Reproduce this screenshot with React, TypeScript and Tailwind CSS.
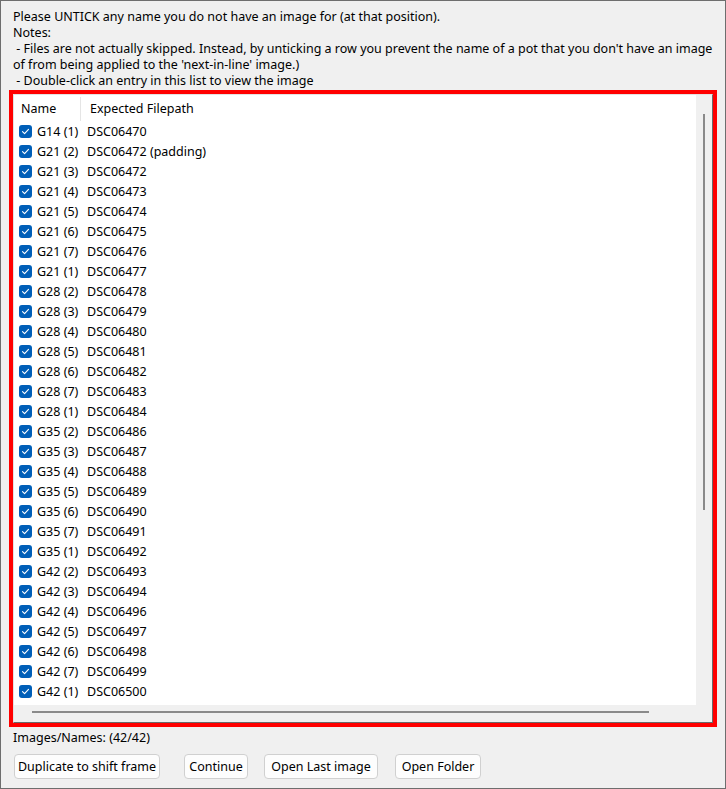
import React from "react";

const rows: [string, string][] = [
  ["G14 (1)", "DSC06470"],
  ["G21 (2)", "DSC06472 (padding)"],
  ["G21 (3)", "DSC06472"],
  ["G21 (4)", "DSC06473"],
  ["G21 (5)", "DSC06474"],
  ["G21 (6)", "DSC06475"],
  ["G21 (7)", "DSC06476"],
  ["G21 (1)", "DSC06477"],
  ["G28 (2)", "DSC06478"],
  ["G28 (3)", "DSC06479"],
  ["G28 (4)", "DSC06480"],
  ["G28 (5)", "DSC06481"],
  ["G28 (6)", "DSC06482"],
  ["G28 (7)", "DSC06483"],
  ["G28 (1)", "DSC06484"],
  ["G35 (2)", "DSC06486"],
  ["G35 (3)", "DSC06487"],
  ["G35 (4)", "DSC06488"],
  ["G35 (5)", "DSC06489"],
  ["G35 (6)", "DSC06490"],
  ["G35 (7)", "DSC06491"],
  ["G35 (1)", "DSC06492"],
  ["G42 (2)", "DSC06493"],
  ["G42 (3)", "DSC06494"],
  ["G42 (4)", "DSC06496"],
  ["G42 (5)", "DSC06497"],
  ["G42 (6)", "DSC06498"],
  ["G42 (7)", "DSC06499"],
  ["G42 (1)", "DSC06500"],
];

function Check() {
  return (
    <div className="w-[13px] h-[13px] rounded-[3px] bg-[#005fb8] flex items-center justify-center shrink-0">
      <svg width="9" height="9" viewBox="0 0 9 9">
        <path d="M1.5 4.6 L3.6 6.6 L7.5 2.4" fill="none" stroke="white" strokeWidth="1.1" strokeLinecap="round" strokeLinejoin="round" />
      </svg>
    </div>
  );
}

function Btn({ children, w }: { children: React.ReactNode; w: string }) {
  return (
    <div className={`h-[25px] ${w} rounded-[4px] border border-[#d0d0d0] bg-[#fdfdfd] flex items-center justify-center text-black`}>
      {children}
    </div>
  );
}

export default function App() {
  return (
    <div
      className="w-[726px] h-[789px] border border-[#6e6e6e] bg-[#f0f0f0] text-black text-[12.5px] leading-[16px] flex flex-col"
      style={{ fontFamily: '"Segoe UI", "Noto Sans", "Open Sans", sans-serif' }}
    >
      <div className="pl-[12px] pt-[8px] h-[89px]">
        <div>Please UNTICK any name you do not have an image for (at that position).</div>
        <div>Notes:</div>
        <div>&nbsp;- Files are not actually skipped. Instead, by unticking a row you prevent the name of a pot that you don't have an image</div>
        <div>of from being applied to the 'next-in-line' image.)</div>
        <div>&nbsp;- Double-click an entry in this list to view the image</div>
      </div>
      <div className="ml-[8px] w-[708px] h-[637px] border-4 border-[#ff0000] flex">
        <div className="flex-1 flex flex-col border-t border-l border-t-[#e2e2e2] border-l-[#e2e2e2] border-r border-b border-r-[#6a6a6a] border-b-[#6a6a6a]">
          <div className="flex flex-1 min-h-0">
            <div className="flex-1 bg-white flex flex-col">
              <div className="h-[26px] flex items-center pt-[2px]">
                <div className="w-[66px] pl-[7px]">Name</div>
                <div className="w-px h-[24px] bg-[#e5e5e5]" />
                <div className="pl-[9px]">Expected Filepath</div>
              </div>
              {rows.map(([n, f], i) => (
                <div key={i} className="h-[20px] flex items-center pl-[5px]">
                  <Check />
                  <div className="w-[55px] pl-[5px] pt-[1px] whitespace-nowrap">{n}</div>
                  <div className="pt-[1px] whitespace-nowrap">{f}</div>
                </div>
              ))}
            </div>
            <div className="w-[16px] bg-[#f0f0f0] relative">
              <div className="absolute left-[7px] top-[19px] w-[2px] h-[396px] bg-[#8a8a8a]" />
            </div>
          </div>
          <div className="h-[17px] bg-[#f0f0f0] relative">
            <div className="absolute left-[18px] top-[6px] h-[2px] w-[617px] bg-[#8a8a8a]" />
          </div>
        </div>
      </div>
      <div className="pl-[12px] pt-[3px] h-[27px]">Images/Names: (42/42)</div>
      <div className="flex pl-[13px] gap-0">
        <Btn w="w-[146px]">Duplicate to shift frame</Btn>
        <div className="w-[24px]" />
        <Btn w="w-[64px]">Continue</Btn>
        <div className="w-[16px]" />
        <Btn w="w-[114px]">Open Last image</Btn>
        <div className="w-[17px]" />
        <Btn w="w-[86px]">Open Folder</Btn>
      </div>
    </div>
  );
}
